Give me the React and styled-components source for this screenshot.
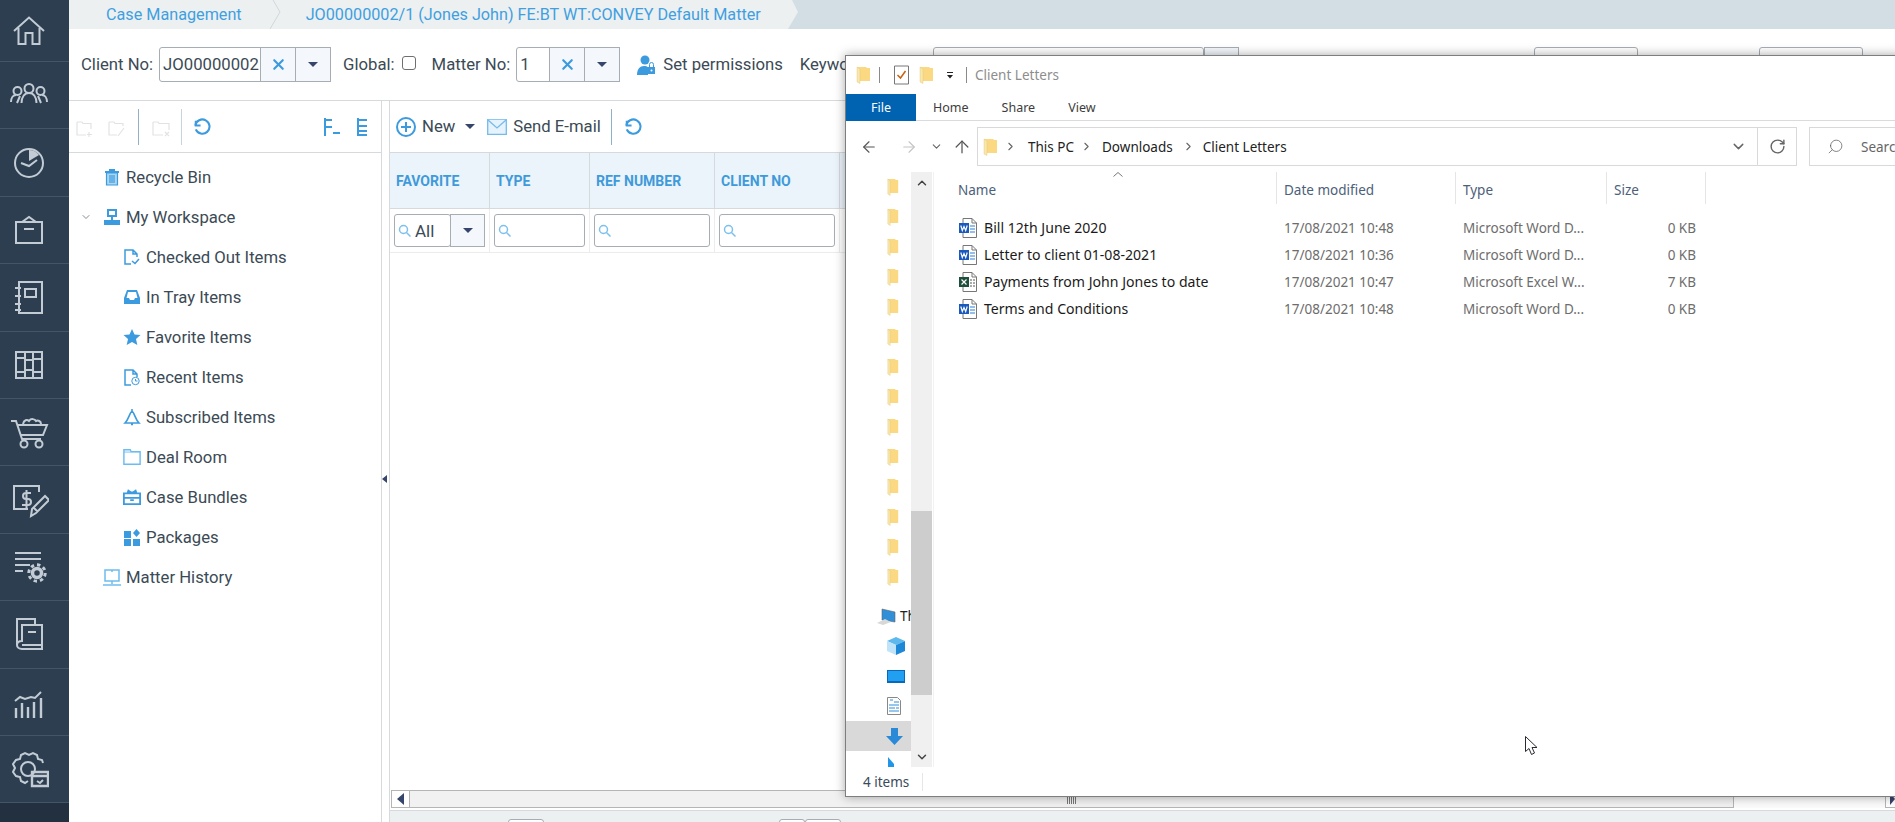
import React from "react";
import styled, { createGlobalStyle } from "styled-components";
import { X, ChevronRight, ChevronDown, ChevronUp, ArrowLeft, ArrowRight, ArrowUp, RotateCw, Search } from "lucide-react";

const GlobalStyle = createGlobalStyle`
    html, body { margin: 0; padding: 0; height: 100%; background: #fff; overflow: hidden; }
    #root { height: 100%; }
    * { box-sizing: border-box; }
    body { font-family: Roboto, "Liberation Sans", sans-serif; color: #3b4a55; }
`;

const Svg = ({ size = 40, box = 40, children, ...rest }) => (
    <svg width={size} height={size} viewBox={`0 0 ${box} ${box}`} fill="none" stroke="currentColor" strokeWidth="2" {...rest}>{children}</svg>
);

const navIcons = [
    <Svg key="home"><path d="M5 20 20 6.5 35 20M9.500 17v16h7V22h7v11h7V17" /></Svg>,
    <Svg key="team"><circle cx="20" cy="13.500" r="4.500" /><circle cx="8.500" cy="16" r="4" /><circle cx="31.500" cy="16" r="4" /><path d="M12.500 28c0-6 3-10 7.500-10s7.500 4 7.500 10M2 27c0-4 2-7 5-7M38 27c0-4-2-7-5-7M8 28l3-7M32 28l-3-7" /></Svg>,
    <Svg key="clock"><circle cx="20" cy="20" r="14" /><path d="M12 20l8 3 8-6" /><path d="M20 7a13 13 0 0 1 10 5l-10 6z" fill="currentColor" stroke="none" /></Svg>,
    <Svg key="box"><path d="M7 12h26v21H7zM15 19h10M13 12l7-5 7 5" /></Svg>,
    <Svg key="note"><path d="M10 5h23v31H10zM6 11h6M6 19h6M6 27h6M6 33h6" /><path d="M16 12h11v8H16z" /></Svg>,
    <Svg key="books"><path d="M7 7h26v26H7zM16 7v26M24 7v26M7 13h9M7 27h9M24 14h9M24 27h9M16 15h8M16 25h8" /></Svg>,
    <Svg key="cart"><path d="M2 9h5l6 18h19M8 13h30l-4 10H12" /><circle cx="15" cy="32" r="3.500" /><circle cx="30" cy="32" r="3.500" /><path d="M14 12c1-4 4-5 6-3 2-3 6-2 7 0 2-1 5 0 5 3" /></Svg>,
    <Svg key="bill"><path d="M30 12V6H5v23h14" /><path d="M22 13h-5a3 3 0 0 0 0 6h2a3 3 0 0 1 0 6h-6M17.500 10v18" /><path d="M22 36l1-7 13-13 4 4-13 13zM25 28l4 4" /></Svg>,
    <Svg key="listgear"><path d="M6 6h26M6 12h26M6 18h15M6 24h8" /><circle cx="28" cy="26" r="4.500" strokeWidth="3.500" /><circle cx="28" cy="26" r="8.200" strokeWidth="3" strokeDasharray="3.400 3" /></Svg>,
    <Svg key="docs"><path d="M8 31V5h18v6M8 31c0-3 2-4 5-4V11h20v24H13c-3 0-5-2-5-4zM13 31h20M19 18h8" /></Svg>,
    <Svg key="chart"><path d="M7 36V26M13 36V21M19 36V25M25 36V20M32 36V16" strokeWidth="2.400" /><path d="M6 19l5-4 5 2 6-2 4 1 6-6" /></Svg>,
    <Svg key="gearcal"><path d="M19 32l-3 2-4-2-1-4-4-1-3-4 2-4-2-4 3-4 4-1 1-4 4-2 4 2 4-2 4 2 1 4 4 1 1 3" /><circle cx="19" cy="20" r="7" /><path d="M23 23h16v14H23zM23 27h16" strokeWidth="2.400" /><path d="M28 32l3 2 3-3" /></Svg>,
];

const Tree = {
    bin: <Svg size={18} box={18}><path d="M2 4h14M6 2h6" /><path d="M3.500 5h11v12h-11zM7 7v8M9 7v8M11 7v8" strokeWidth="1.200" fill="#a9d6f2" /></Svg>,
    workspace: <Svg size={18} box={18} stroke="none" fill="currentColor"><path d="M4 1h10v8H4zM1 12h16v5H1zM8 9h2v3H8z" /><path d="M6 3h6v4H6z" fill="#fff" /></Svg>,
    checked: <Svg size={18} box={18} strokeWidth="1.500"><path d="M8 16H2V2h8l4 4v3M10 2v4h4" /><path d="M9 13l3 2.500 4-4.500" /></Svg>,
    tray: <Svg size={18} box={18} stroke="none" fill="currentColor"><path d="M4 2h10l3 8v6H1v-6zM5 4l-1.500 6H6l1 2h4l1-2h2.500L13 4z" fillRule="evenodd" /></Svg>,
    star: <Svg size={18} box={18} stroke="none" fill="currentColor"><path d="M9 1l2.500 5.500 6 .6-4.500 4 1.300 6L9 14l-5.300 3 1.300-6L.5 7.100l6-.6z" /></Svg>,
    recent: <Svg size={18} box={18} strokeWidth="1.500"><path d="M8 17H2V2h8l4 4v3M10 2v4h4" /><circle cx="12.500" cy="13" r="3.700" strokeWidth="1" /><path d="M12.500 11v2h2" strokeWidth="1" /></Svg>,
    bell: <Svg size={18} box={18} strokeWidth="1.600"><path d="M9 3c3 3 3 8 7 12H2c4-4 4-9 7-12zM9 1v2M8 16.500h2" /></Svg>,
    folder: <Svg size={20} box={20} strokeWidth="1.600" color="#6dbcef"><path d="M1 2h7l1 2h10v14H1z" /><path d="M1 4.500h18" strokeWidth="1" /></Svg>,
    bundle: <Svg size={20} box={20}><path d="M1 6h18v12H1zM1 11h18M8 13.500h4M5 6l1-3 3 2 2 0 3-2 1 3" /></Svg>,
    packages: <Svg size={18} box={18} stroke="none" fill="currentColor"><path d="M1 3h7v7H1zM1 11h7v7H1zM10 11h7v7h-7zM13.500 1l3.500 4-3.500 4L10 5z" /></Svg>,
    history: <Svg size={18} box={18} strokeWidth="1.500" color="#6dbcef"><path d="M2 2h14v11H2zM2 2h7v2M9 13v3M0 17h18" /></Svg>,
};

const PanelTool = {
    add: <path d="M2 5h5l1 1.500h8V12M2 5v13h9M14 15v5M12 17.500h5" />,
    rename: <path d="M2 5h5l1 1.500h8V9M2 5v13h8M11 19l6-8" />,
    remove: <path d="M2 5h5l1 1.500h10V13M2 5v13h10M14 15l4 4M18 15l-4 4" />,
};

const Folder = ({ small }) => (
    <svg width={small ? 12 : 15} height="18" viewBox="0 0 15 18" preserveAspectRatio="none">
        <path d="M1 1h9l1 1h3v13H2z" fill="#fbd982" />
        <path d="M1 1v15l3 1.500V3z" fill="#f7e7b0" stroke="#e6c568" strokeWidth=".4" />
    </svg>
);

const FileIcon = ({ kind }) => {
    const excel = kind === "excel";
    return (
        <svg width="18" height="20" viewBox="0 0 18 20">
            <path d="M4 .5h9l4.500 4.500v14.500H4z" fill="#fff" stroke="#777" />
            <path d="M13 .5V5h4.500" fill="none" stroke="#777" />
            <path d="M11 8h5M11 11h5M11 14h5" stroke={excel ? "#555" : "#2b7cd3"} strokeDasharray={excel ? "2 1" : "none"} />
            <rect x="0" y="5" width="10" height="10" fill={excel ? "#1d4f3c" : "#185abd"} />
            <path d={excel ? "M2.500 7.500l5 5M7.500 7.500l-5 5" : "M1.800 7.500l1.500 5 1.700-4 1.700 4 1.500-5"} fill="none" stroke="#fff" strokeWidth="1.200" />
        </svg>
    );
};

const treeRows = [
    { label: "Recycle Bin", icon: "bin", level: 0 },
    { label: "My Workspace", icon: "workspace", level: 0, open: true },
    { label: "Checked Out Items", icon: "checked", level: 1 },
    { label: "In Tray Items", icon: "tray", level: 1 },
    { label: "Favorite Items", icon: "star", level: 1 },
    { label: "Recent Items", icon: "recent", level: 1 },
    { label: "Subscribed Items", icon: "bell", level: 1 },
    { label: "Deal Room", icon: "folder", level: 1 },
    { label: "Case Bundles", icon: "bundle", level: 1 },
    { label: "Packages", icon: "packages", level: 1 },
    { label: "Matter History", icon: "history", level: 0 },
];

const files = [
    { name: "Bill 12th June 2020", date: "17/08/2021 10:48", type: "Microsoft Word D...", size: "0 KB", kind: "word" },
    { name: "Letter to client 01-08-2021", date: "17/08/2021 10:36", type: "Microsoft Word D...", size: "0 KB", kind: "word" },
    { name: "Payments from John Jones to date", date: "17/08/2021 10:47", type: "Microsoft Excel W...", size: "7 KB", kind: "excel" },
    { name: "Terms and Conditions", date: "17/08/2021 10:48", type: "Microsoft Word D...", size: "0 KB", kind: "word" },
];

const Combo = ({ value, width }) => (
    <ComboBox>
        <FieldBox $width={width}>{value}</FieldBox>
        <ComboBtn><X size={17} strokeWidth={3} color="#3c9ade" /></ComboBtn>
        <ComboBtn><Caret /></ComboBtn>
    </ComboBox>
);

const MagGlass = () => (
    <svg width="13" height="13" viewBox="0 0 13 13" fill="none" stroke="#7cc0ee" strokeWidth="1.500"><circle cx="5.500" cy="5.500" r="4" /><path d="M8.500 8.500l4 4" /></svg>
);

export default function App() {
    return (
        <Page>
            <GlobalStyle />
            <Sidebar>
                {navIcons.map((icon, index) => <NavItem key={index} $first={index === 0}>{icon}</NavItem>)}
            </Sidebar>

            <Main>
                <Breadcrumb>
                    <Trail>
                        <Crumb $pad={37}>Case Management</Crumb>
                        <CrumbArrow width="12" height="29" viewBox="0 0 12 29" fill="none" stroke="#cfd8dc"><path d="M4 0l7 12L1 29" /></CrumbArrow>
                        <Crumb $pad={25}>JO00000002/1 (Jones John) FE:BT WT:CONVEY Default Matter</Crumb>
                    </Trail>
                </Breadcrumb>

                <TopBar>
                    <BarLabel>Client No:</BarLabel>
                    <Combo value="JO00000002" width={102} />
                    <BarLabel $gap={12}>Global:</BarLabel>
                    <CheckBox />
                    <BarLabel $gap={16}>Matter No:</BarLabel>
                    <Combo value="1" width={34} />
                    <PermIcon viewBox="0 0 20 20" fill="#3c9ade">
                        <circle cx="9" cy="5" r="4.500" />
                        <path d="M1 20c0-6 3-9 7-9 2 0 3 .5 4 1v8z" />
                        <path d="M12 12h7v7h-7z" />
                        <path d="M13.500 12V9.500a2 2 0 0 1 4 0V12" fill="none" stroke="#3c9ade" />
                        <circle cx="15.500" cy="15.500" r="1" fill="#fff" />
                    </PermIcon>
                    <BarLabel $gap={7}>Set permissions</BarLabel>
                    <BarLabel $gap={17}>Keywords</BarLabel>
                    <HiddenField $gap={61} $width={271} />
                    <HiddenBtn />
                    <HiddenField $gap={295} $width={104} />
                    <HiddenField $gap={121} $width={104} />
                </TopBar>

                <Panels>
                    <TreePanel>
                        <PanelBar>
                            <FadedTools>
                                <Svg size={20} box={20} strokeWidth="1.200">{PanelTool.add}</Svg>
                                <Svg size={20} box={20} strokeWidth="1.200">{PanelTool.rename}</Svg>
                            </FadedTools>
                            <VSep $left={11} />
                            <FadedTools $left={12}>
                                <Svg size={20} box={20} strokeWidth="1.200">{PanelTool.remove}</Svg>
                            </FadedTools>
                            <VSep $left={10} $thin />
                            <RefreshIcon $left={10}><path d="M4 4v5h5" /><path d="M3.500 9a7.500 7.500 0 1 1 .5 4" /></RefreshIcon>
                            <TreeActions>
                                <svg width="18" height="20" viewBox="0 0 18 20" fill="none" stroke="#3c9ade" strokeWidth="2"><path d="M2 1v18M2 3h7M2 10h7M10 16h7" /></svg>
                                <svg width="12" height="20" viewBox="0 0 12 20" fill="none" stroke="#3c9ade" strokeWidth="2"><path d="M2 1v18M2 3h9M2 9h9M2 14h9M2 18h9" /></svg>
                            </TreeActions>
                        </PanelBar>
                        <TreeList>
                            {treeRows.map(row => (
                                <TreeRow key={row.label} $level={row.level}>
                                    {row.level === 0 && <Toggle>{row.open && <ChevronDown size={18} strokeWidth={1.500} color="#5a6670" />}</Toggle>}
                                    <TreeIcon>{Tree[row.icon]}</TreeIcon>
                                    <span>{row.label}</span>
                                </TreeRow>
                            ))}
                        </TreeList>
                    </TreePanel>

                    <Splitter><SplitArrow /></Splitter>

                    <GridPanel>
                        <PanelBar>
                            <svg width="20" height="20" viewBox="0 0 20 20" fill="none" stroke="#3c9ade" strokeWidth="2" style={{ marginLeft: 6 }}><circle cx="10" cy="10" r="9" /><path d="M10 5v10M5 10h10" /></svg>
                            <ToolText $gap={6}>New</ToolText>
                            <Caret $gap={10} />
                            <MailIcon viewBox="0 0 20 16" fill="#e6f3fc" stroke="#74bbea" strokeWidth="1.300"><path d="M.7.7h18.600v14.600H.7z" /><path d="M.7.7L10 9l9.300-8.300" /></MailIcon>
                            <ToolText $gap={6}>Send E-mail</ToolText>
                            <VSep $left={10} />
                            <RefreshIcon $left={11}><path d="M4 4v5h5" /><path d="M3.500 9a7.500 7.500 0 1 1 .5 4" /></RefreshIcon>
                        </PanelBar>

                        <HeaderRow>
                            <HeaderCell>FAVORITE</HeaderCell>
                            <HeaderCell>TYPE</HeaderCell>
                            <HeaderCell>REF NUMBER</HeaderCell>
                            <HeaderCell>CLIENT NO</HeaderCell>
                            <HeaderCell />
                        </HeaderRow>

                        <FilterRow>
                            <FilterCell>
                                <FilterInput>
                                    <MagGlass />
                                    <span>All</span>
                                </FilterInput>
                                <FilterBtn><Caret /></FilterBtn>
                            </FilterCell>
                            <FilterCell><FilterInput><MagGlass /></FilterInput></FilterCell>
                            <FilterCell><FilterInput><MagGlass /></FilterInput></FilterCell>
                            <FilterCell><FilterInput><MagGlass /></FilterInput></FilterCell>
                            <FilterCell />
                        </FilterRow>

                        <GridBody />

                        <HScroll>
                            <ScrollBtn><LeftArrow /></ScrollBtn>
                            <ScrollTrack><Grip /></ScrollTrack>
                            <ScrollRest />
                            <ScrollEnd><RightArrow /></ScrollEnd>
                        </HScroll>

                        <StatusStrip>
                            <PagerBox $gap={118} $width={36} />
                            <PagerBox $gap={235} $width={26} />
                            <PagerBox $gap={0} $width={36} />
                        </StatusStrip>
                    </GridPanel>
                </Panels>
            </Main>

            <Explorer>
                <TitleBar>
                    <Folder />
                    <TitleSep $left={8} />
                    <TitleItem $gap={14}><svg width="15" height="20" viewBox="0 0 15 20" fill="none"><path d="M.5 1h14v18H.5z" stroke="#777" fill="#fff" /><path d="M3.500 10l3 3 5-7" stroke="#c8620f" strokeWidth="1.500" /></svg></TitleItem>
                    <TitleItem $gap={10}><Folder /></TitleItem>
                    <TitleItem $gap={12}>
                        <svg width="8" height="8" viewBox="0 0 8 8" fill="#222"><path d="M1 1h6v1H1zM1 4h6L4 7.500z" /></svg>
                    </TitleItem>
                    <TitleSep $left={12} />
                    <TitleText>Client Letters</TitleText>
                </TitleBar>

                <RibbonTabs>
                    <FileTab>File</FileTab>
                    <RibbonTab $gap={17}>Home</RibbonTab>
                    <RibbonTab $gap={33}>Share</RibbonTab>
                    <RibbonTab $gap={33}>View</RibbonTab>
                </RibbonTabs>

                <NavRow>
                    <NavBtn $gap={14}><ArrowLeft size={18} strokeWidth={1.500} color="#555" /></NavBtn>
                    <NavBtn $gap={22}><ArrowRight size={18} strokeWidth={1.500} color="#c4c4c4" /></NavBtn>
                    <NavBtn $gap={12}><ChevronDown size={13} color="#666" /></NavBtn>
                    <NavBtn $gap={9}><ArrowUp size={20} strokeWidth={1.500} color="#555" /></NavBtn>
                    <AddressBar>
                        <Folder />
                        <PathChevron $gap={6}><ChevronRight size={13} color="#666" /></PathChevron>
                        <PathPart $gap={11}>This PC</PathPart>
                        <PathChevron $gap={6}><ChevronRight size={13} color="#666" /></PathChevron>
                        <PathPart $gap={9}>Downloads</PathPart>
                        <PathChevron $gap={9}><ChevronRight size={13} color="#666" /></PathChevron>
                        <PathPart $gap={8}>Client Letters</PathPart>
                        <AddressEnd>
                            <ChevronDown size={17} color="#666" />
                        </AddressEnd>
                        <RefreshBox><RotateCw size={17} strokeWidth={2} color="#666" /></RefreshBox>
                    </AddressBar>
                    <SearchBox>
                        <Search size={17} strokeWidth={1} color="#555" style={{ transform: "scaleX(-1)" }} />
                        <SearchText>Search Client Letters</SearchText>
                    </SearchBox>
                </NavRow>

                <ExplorerBody>
                    <NavPane>
                        {Array.from({ length: 14 }).map((_, index) => <PaneRow key={index}><Folder small /></PaneRow>)}
                        <PaneGap />
                        <PaneRow $shift={-10}>
                            <svg width="20" height="18" viewBox="0 0 20 18"><path d="M5 2l13 3v10L5 13z" fill="#2f8fd8" stroke="#666" strokeWidth=".6" /><path d="M0 16l8-4 6 3-8 3z" fill="#d8d8d8" /></svg>
                            <PcText>Th</PcText>
                        </PaneRow>
                        <PaneRow>
                            <svg width="18" height="18" viewBox="0 0 18 18"><path d="M9 0l9 4-9 4-9-4z" fill="#5db8ee" /><path d="M0 4l9 4v10l-9-4z" fill="#bfe4fa" /><path d="M18 4L9 8v10l9-4z" fill="#1e88d8" /></svg>
                        </PaneRow>
                        <PaneRow>
                            <svg width="18" height="13" viewBox="0 0 18 13"><rect width="18" height="13" fill="#0a68b8" /><rect x="1" y="1" width="16" height="10" fill="#21a0f2" /></svg>
                        </PaneRow>
                        <PaneRow>
                            <svg width="14" height="18" viewBox="0 0 14 18"><path d="M.5.5h10l3 3v14H.5z" fill="#fff" stroke="#888" /><path d="M3 3h3M7 5h5M2 8h10M2 11h6M9 11h3M2 14h10" stroke="#2f8fd8" /></svg>
                        </PaneRow>
                        <PaneRow $selected>
                            <svg width="17" height="17" viewBox="0 0 17 17"><path d="M5 0h7v8h5l-8.500 9L0 8h5z" fill="#2b8ad8" /></svg>
                        </PaneRow>
                        <PaneRow>
                            <svg width="8" height="18" viewBox="0 0 8 18"><path d="M1 0l6 7v11H1z" fill="#2196e8" /></svg>
                        </PaneRow>
                    </NavPane>

                    <PaneScroll>
                        <ScrollArrow><ChevronUp size={14} strokeWidth={2.500} color="#444" /></ScrollArrow>
                        <ScrollGutter><ScrollThumb /></ScrollGutter>
                        <ScrollArrow><ChevronDown size={14} strokeWidth={2.500} color="#444" /></ScrollArrow>
                    </PaneScroll>

                    <FileArea>
                        <ColumnsRow>
                            <ColumnHead $first>Name<SortMark viewBox="0 0 10 5" fill="none" stroke="#777"><path d="M.5 4.500L5 .5l4.500 4" /></SortMark></ColumnHead>
                            <ColumnHead>Date modified</ColumnHead>
                            <ColumnHead>Type</ColumnHead>
                            <ColumnHead>Size</ColumnHead>
                        </ColumnsRow>
                        <FileList>
                            {files.map(file => (
                                <FileRow key={file.name}>
                                    <FileName><FileIcon kind={file.kind} />{file.name}</FileName>
                                    <FileMeta>{file.date}</FileMeta>
                                    <FileMeta>{file.type}</FileMeta>
                                    <FileMeta $right>{file.size}</FileMeta>
                                </FileRow>
                            ))}
                        </FileList>
                    </FileArea>
                </ExplorerBody>

                <ExplorerStatus><ItemCount>4 items</ItemCount></ExplorerStatus>
            </Explorer>

            <Pointer width="13" height="20" viewBox="0 0 13 20" fill="#fff" stroke="#2a2a33"><path d="M.5.5v15l3.500-3 2.500 6 3-1.500-2.500-5.500h5z" /></Pointer>
        </Page>
    );
}

const Page = styled.div`
    position: relative;
    display: grid;
    grid-template-columns: 69px 1fr;
    height: 822px;
    width: 1895px;
    overflow: hidden;
`;

const Sidebar = styled.nav`
    display: flex;
    flex-direction: column;
    background: #22303f;
`;

const NavItem = styled.div`
    height: ${p => p.$first ? "62px" : "67.400px"};
    flex: none;
    display: flex;
    align-items: center;
    justify-content: center;
    padding-right: 11px;
    background: #2c3e50;
    border-bottom: 1px solid #445666;
    color: #c3ccd4;
`;

const Main = styled.div`
    display: flex;
    flex-direction: column;
    min-width: 0;
`;

const Breadcrumb = styled.div`
    height: 29px;
    flex: none;
    background: #d2dee4;
`;

const Trail = styled.div`
    width: 729px;
    height: 29px;
    display: flex;
    align-items: center;
    background: #ecf0f1;
    clip-path: polygon(0 0, 723px 0, 729px 12px, 719px 29px, 0 29px);
`;

const Crumb = styled.span`
    padding-left: ${p => p.$pad}px;
    font-size: 16.200px;
    color: #3f9fe0;
    white-space: nowrap;
`;

const CrumbArrow = styled.svg`
    margin-left: 27px;
    flex: none;
`;

const TopBar = styled.div`
    height: 72px;
    flex: none;
    display: flex;
    align-items: center;
    padding-left: 12px;
    border-bottom: 1px solid #d6dadc;
    white-space: nowrap;
`;

const BarLabel = styled.span`
    margin-left: ${p => p.$gap || 0}px;
    font-size: 16.700px;
    color: #3b4a55;
`;

const ComboBox = styled.div`
    display: flex;
    margin-left: 6px;
    height: 35px;
`;

const FieldBox = styled.div`
    width: ${p => p.$width}px;
    display: flex;
    align-items: center;
    padding-left: 3px;
    border: 1px solid #a6adb3;
    border-radius: 3px 0 0 3px;
    font-size: 16.700px;
    color: #3b4a55;
    background: #fff;
    overflow: hidden;
`;

const ComboBtn = styled.div`
    width: 36px;
    display: flex;
    align-items: center;
    justify-content: center;
    background: #f4f8fc;
    border: 1px solid #a6adb3;
    margin-left: -1px;
`;

const Caret = styled.span`
    display: inline-block;
    margin-left: ${p => p.$gap || 0}px;
    width: 0;
    height: 0;
    border-left: 5px solid transparent;
    border-right: 5px solid transparent;
    border-top: 5px solid #36456b;
`;

const CheckBox = styled.span`
    width: 14px;
    height: 14px;
    margin-left: 7px;
    margin-bottom: 3px;
    border: 1px solid #6f6f6f;
    border-radius: 3px;
    background: #fff;
`;

const PermIcon = styled.svg`
    width: 20px;
    height: 20px;
    margin-left: 16px;
`;

const HiddenField = styled.div`
    flex: none;
    margin-left: ${p => p.$gap}px;
    width: ${p => p.$width}px;
    height: 35px;
    border: 1px solid #a6adb3;
    border-radius: 3px;
`;

const HiddenBtn = styled.div`
    flex: none;
    width: 35px;
    height: 35px;
    background: #f4f8fc;
    border: 1px solid #a6adb3;
`;

const Panels = styled.div`
    flex: 1;
    display: flex;
    min-height: 0;
`;

const TreePanel = styled.section`
    width: 313px;
    flex: none;
    border-right: 1px solid #d6dadc;
    display: flex;
    flex-direction: column;
`;

const PanelBar = styled.div`
    height: 52px;
    flex: none;
    display: flex;
    align-items: center;
    border-bottom: 1px solid #d6dadc;
`;

const FadedTools = styled.div`
    display: flex;
    gap: 12px;
    margin-left: ${p => p.$left || 6}px;
    color: #e0e3e5;
`;

const VSep = styled.div`
    width: 1px;
    height: 36px;
    margin-left: ${p => p.$left}px;
    background: ${p => p.$thin ? "#c5d4df" : "#8fb2c9"};
`;

const RefreshIcon = styled.svg.attrs({ viewBox: "0 0 20 20", fill: "none", stroke: "#3c9ade", strokeWidth: 2.200 })`
    width: 19px;
    height: 19px;
    margin-left: ${p => p.$left}px;
`;

const TreeActions = styled.div`
    margin-left: 112px;
    display: flex;
    gap: 15px;
    align-items: center;
`;

const TreeList = styled.div`
    padding-top: 4px;
`;

const TreeRow = styled.div`
    height: 40px;
    display: flex;
    align-items: center;
    padding-left: ${p => p.$level === 0 ? 11 : 54}px;
    font-size: 16.700px;
    color: #3b4a55;
`;

const Toggle = styled.span`
    width: 12px;
    margin-right: 11px;
    display: flex;
    justify-content: center;
`;

const TreeIcon = styled.span`
    width: 18px;
    height: 20px;
    margin-right: 5px;
    display: flex;
    align-items: center;
    justify-content: center;
    color: #3c9ade;
`;

const Splitter = styled.div`
    width: 8px;
    flex: none;
    display: flex;
    align-items: center;
    border-right: 1px solid #d6dadc;
`;

const SplitArrow = styled.span`
    margin: 35px 0 0 0;
    width: 0;
    height: 0;
    border-top: 4px solid transparent;
    border-bottom: 4px solid transparent;
    border-right: 5px solid #36456b;
`;

const GridPanel = styled.section`
    flex: 1;
    min-width: 0;
    display: flex;
    flex-direction: column;
`;

const ToolText = styled.span`
    margin-left: ${p => p.$gap}px;
    font-size: 16.700px;
    color: #3b4a55;
`;

const MailIcon = styled.svg`
    width: 20px;
    height: 16px;
    margin-left: 12px;
`;

const columns = "100px 100px 125px 125px 1fr";

const HeaderRow = styled.div`
    height: 56px;
    flex: none;
    display: grid;
    grid-template-columns: ${columns};
    background: #ebf4fb;
    border-bottom: 1px solid #d6dadc;
`;

const HeaderCell = styled.div`
    display: flex;
    align-items: center;
    padding-left: 6px;
    border-right: 1px solid #d6dadc;
    font-size: 14px;
    font-weight: 700;
    color: #3f9ada;
`;

const FilterRow = styled.div`
    height: 44px;
    flex: none;
    display: grid;
    grid-template-columns: ${columns};
    border-bottom: 1px solid #ececec;
`;

const FilterCell = styled.div`
    display: flex;
    padding: 5px 4px;
    border-right: 1px solid #ececec;
`;

const FilterInput = styled.div`
    flex: 1;
    min-width: 0;
    display: flex;
    align-items: center;
    gap: 4px;
    padding-left: 3px;
    border: 1px solid #a6adb3;
    border-radius: 3px;
    font-size: 17px;
    color: #3b4a55;
`;

const FilterBtn = styled.div`
    width: 35px;
    flex: none;
    display: flex;
    align-items: center;
    justify-content: center;
    background: #f4f8fc;
    border: 1px solid #a6adb3;
    margin-left: -1px;
`;

const GridBody = styled.div`
    flex: 1;
`;

const HScroll = styled.div`
    height: 18px;
    flex: none;
    display: flex;
    margin-left: 1px;
    background: #fff;
`;

const ScrollBtn = styled.div`
    width: 19px;
    flex: none;
    display: flex;
    align-items: center;
    justify-content: center;
    background: #fff;
    border: 1px solid #b5b5b5;
`;

const ScrollEnd = styled.div`
    width: 10px;
    flex: none;
    display: flex;
    align-items: center;
    justify-content: flex-end;
    border: 1px solid #b5b5b5;
    border-right: none;
    overflow: hidden;
`;

const LeftArrow = styled.span`
    width: 0;
    height: 0;
    border-top: 6px solid transparent;
    border-bottom: 6px solid transparent;
    border-right: 7px solid #36456b;
`;

const RightArrow = styled.span`
    width: 0;
    height: 0;
    border-top: 6px solid transparent;
    border-bottom: 6px solid transparent;
    border-left: 5px solid #36456b;
`;

const ScrollTrack = styled.div`
    width: 1324px;
    flex: none;
    display: flex;
    align-items: center;
    justify-content: center;
    background: #f1f1f1;
    border: 1px solid #b5b5b5;
    border-left: none;
`;

const Grip = styled.span`
    width: 9px;
    height: 9px;
    background: repeating-linear-gradient(90deg, #777 0 1px, #f1f1f1 1px 2px);
`;

const ScrollRest = styled.div`
    flex: 1;
    background: #fbfbfb;
`;

const StatusStrip = styled.div`
    height: 12px;
    margin-top: 2px;
    flex: none;
    display: flex;
    background: #ecf0f1;
    border-top: 1px solid #d6dadc;
    overflow: hidden;
`;

const PagerBox = styled.div`
    margin: 8px 0 0 ${p => p.$gap}px;
    width: ${p => p.$width}px;
    height: 20px;
    background: #fff;
    border: 1px solid #a6adb3;
    border-radius: 3px;
`;

const Explorer = styled.div`
    position: absolute;
    left: 845px;
    top: 55px;
    width: 1060px;
    height: 742px;
    display: flex;
    flex-direction: column;
    background: #fff;
    border: 1px solid #7c7e80;
    box-shadow: 0 0 10px rgba(0, 0, 0, .35);
    font-family: "Noto Sans", sans-serif;
    font-size: 13.500px;
`;

const TitleBar = styled.div`
    height: 38px;
    flex: none;
    display: flex;
    align-items: center;
    padding-left: 10px;
`;

const TitleItem = styled.span`
    display: flex;
    margin-left: ${p => p.$gap}px;
`;

const TitleSep = styled.div`
    width: 1px;
    height: 16px;
    margin-left: ${p => p.$left || 0}px;
    background: #8a8a8a;
`;

const TitleText = styled.span`
    margin-left: 8px;
    color: #8d8d8d;
`;

const RibbonTabs = styled.div`
    height: 27px;
    flex: none;
    display: flex;
    align-items: stretch;
    border-bottom: 1px solid #dadbdc;
    font-size: 12.500px;
`;

const FileTab = styled.div`
    width: 70px;
    margin-bottom: -1px;
    display: flex;
    align-items: center;
    justify-content: center;
    background: #0063b1;
    color: #fff;
`;

const RibbonTab = styled.div`
    margin-left: ${p => p.$gap}px;
    display: flex;
    align-items: center;
    color: #3d3d3d;
`;

const NavRow = styled.div`
    height: 51px;
    flex: none;
    display: flex;
    align-items: center;
`;

const NavBtn = styled.span`
    display: flex;
    margin-left: ${p => p.$gap}px;
`;

const AddressBar = styled.div`
    width: 820px;
    flex: none;
    height: 39px;
    margin-left: 5px;
    display: flex;
    align-items: center;
    padding-left: 5px;
    border: 1px solid #d9d9d9;
    color: #222;
`;

const PathChevron = styled.span`
    display: flex;
    margin-left: ${p => p.$gap}px;
`;

const PathPart = styled.span`
    margin-left: ${p => p.$gap}px;
`;

const AddressEnd = styled.span`
    display: flex;
    margin-left: auto;
    margin-right: 10px;
`;

const RefreshBox = styled.span`
    width: 39px;
    align-self: stretch;
    display: flex;
    align-items: center;
    justify-content: center;
    border-left: 1px solid #d9d9d9;
`;

const SearchBox = styled.div`
    width: 200px;
    flex: none;
    height: 39px;
    margin-left: 12px;
    display: flex;
    align-items: center;
    padding-left: 17px;
    border: 1px solid #d9d9d9;
    color: #666;
`;

const SearchText = styled.span`
    margin-left: 17px;
    white-space: nowrap;
`;

const ExplorerBody = styled.div`
    flex: 1;
    min-height: 0;
    display: flex;
`;

const NavPane = styled.div`
    width: 65px;
    flex: none;
    overflow: hidden;
`;

const PaneRow = styled.div`
    height: 30px;
    position: relative;
    display: flex;
    align-items: center;
    padding-left: ${p => p.$selected ? 37 : 41}px;
    background: ${p => p.$selected ? "#d9d9d9" : "transparent"};
    & > svg:first-child { margin-left: ${p => p.$selected ? 3 : p.$shift || 0}px; flex: none; }
`;

const PaneGap = styled.div`
    height: 9px;
`;

const PcText = styled.span`
    position: absolute;
    left: 54px;
    color: #222;
`;

const PaneScroll = styled.div`
    width: 21px;
    flex: none;
    display: flex;
    flex-direction: column;
    background: #f0f0f0;
`;

const ScrollArrow = styled.div`
    height: 21px;
    flex: none;
    display: flex;
    align-items: center;
    justify-content: center;
`;

const ScrollGutter = styled.div`
    flex: 1;
    padding-top: 318px;
`;

const ScrollThumb = styled.div`
    height: 184px;
    background: #cdcdcd;
`;

const FileArea = styled.div`
    flex: 1;
    margin-left: 1px;
    border-left: 1px solid #f2f2f2;
`;

const fileColumns = "343px 179px 151px 99px";

const ColumnsRow = styled.div`
    height: 32px;
    display: grid;
    grid-template-columns: ${fileColumns};
`;

const ColumnHead = styled.div`
    position: relative;
    display: flex;
    align-items: center;
    padding: 3px 0 0 ${p => p.$first ? 24 : 7}px;
    border-right: 1px solid #e5e5e5;
    color: #4c607a;
`;

const SortMark = styled.svg`
    position: absolute;
    left: 179px;
    top: 0;
    width: 10px;
    height: 5px;
`;

const FileList = styled.div`
    padding-top: 10px;
`;

const FileRow = styled.div`
    height: 27px;
    display: grid;
    grid-template-columns: ${fileColumns};
    align-items: center;
`;

const FileName = styled.div`
    display: flex;
    align-items: center;
    gap: 7px;
    padding-left: 25px;
    font-size: 14.100px;
    color: #1b1b1b;
    white-space: nowrap;
`;

const FileMeta = styled.div`
    padding: 0 10px 0 7px;
    color: #6d6d6d;
    white-space: nowrap;
    text-align: ${p => p.$right ? "right" : "left"};
`;

const ExplorerStatus = styled.div`
    height: 29px;
    flex: none;
    display: flex;
    align-items: center;
`;

const ItemCount = styled.span`
    width: 77px;
    padding-left: 17px;
    border-right: 1px solid #e6e6e6;
    color: #3a4a5a;
`;

const Pointer = styled.svg`
    position: absolute;
    left: 1525px;
    top: 736px;
`;
